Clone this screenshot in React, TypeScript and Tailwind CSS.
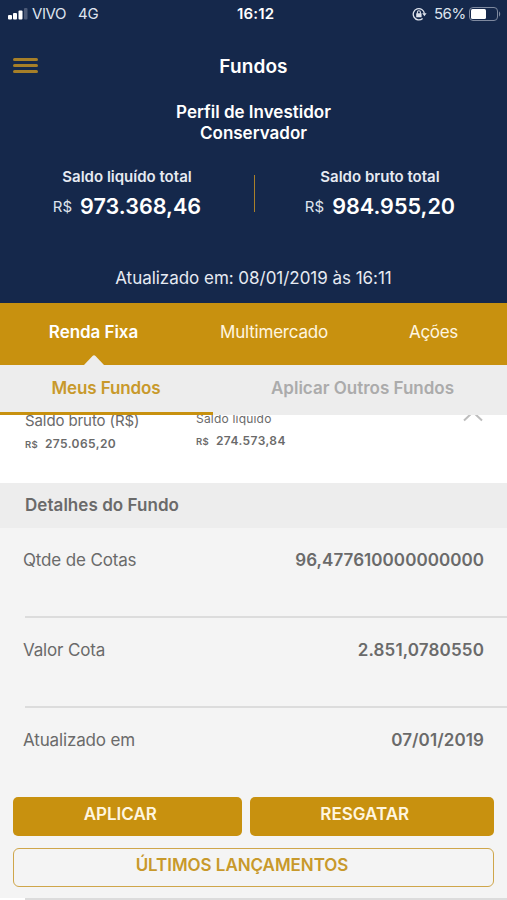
import React from 'react';
import clsx from 'clsx';

const BALANCES = [
    { label: 'Saldo liquído total', amount: '973.368,46' },
    { label: 'Saldo bruto total', amount: '984.955,20' }
];

const DETAILS = [
    { label: 'Qtde de Cotas', value: '96,477610000000000', spacing: 'tracking-[0.05px]' },
    { label: 'Valor Cota', value: '2.851,0780550', spacing: 'tracking-[0.15px]' },
    { label: 'Atualizado em', value: '07/01/2019', spacing: 'tracking-[0.1px]' }
];

const StatusBar = () => (
    <div className="flex h-7 items-center pl-2 pr-1 text-[15px] leading-7 text-[#dfe4ee]">
        <svg width="20" height="12" viewBox="0 0 20 12" className="shrink-0">
            <rect x="0" y="7" width="4" height="4.5" rx="1" fill="#fff" />
            <rect x="5" y="5" width="4" height="6.5" rx="1" fill="#fff" />
            <rect x="10.5" y="2.5" width="4" height="9" rx="1" fill="#fff" />
            <rect x="16" y="0" width="3.5" height="11.5" rx="1" fill="#4c5a77" />
        </svg>
        <span className="ml-1 w-[46px] tracking-[-0.4px]">VIVO</span>
        <span className="w-[159px] tracking-[-0.2px]">4G</span>
        <span className="w-[175px] font-semibold tracking-[0.2px] text-white">16:12</span>
        <svg width="15" height="14" viewBox="0 0 15 14" className="shrink-0" fill="none" stroke="#dfe4ee">
            <path d="M10.6 11.4A5.6 5.6 0 1 1 12.4 6.6" strokeWidth="1.3" />
            <path d="M10.2 6.2h4.4L12.4 9.2z" fill="#dfe4ee" stroke="none" />
            <rect x="4.2" y="6.3" width="5.4" height="4" rx="0.5" fill="#dfe4ee" stroke="none" />
            <path d="M5.4 6.8V5.2a1.5 1.5 0 0 1 3 0v1.6" strokeWidth="1.1" />
        </svg>
        <span className="ml-[7px] w-[35px] tracking-[-0.5px]">56%</span>
        <svg width="32" height="14" viewBox="0 0 32 14" className="shrink-0">
            <rect x="0.5" y="0.5" width="28" height="13" rx="3.5" fill="none" stroke="#7e899f" />
            <rect x="2" y="2" width="15" height="10" rx="1.5" fill="#fff" />
            <path d="M30 4.5c1.6.6 1.6 4.4 0 5z" fill="#7e899f" />
        </svg>
    </div>
);

const Header = () => (
    <header className="h-[303px] bg-[#15284b] text-white">
        <StatusBar />
        <div className="grid h-[74px] grid-cols-[1fr_auto_1fr] items-center px-[13px]">
            <button className="flex w-[25px] flex-col gap-[3px]" aria-label="Menu">
                <span className="h-[3px] w-full rounded-full bg-[#a67f28]" />
                <span className="h-[3px] w-full rounded-full bg-[#a67f28]" />
                <span className="h-[3px] w-full rounded-full bg-[#a67f28]" />
            </button>
            <h1 className="pt-1 text-[19px] font-semibold tracking-[0.1px]">Fundos</h1>
        </div>
        <p className="text-center text-[17px] font-semibold leading-[21px]">
            Perfil de Investidor
            <br />
            Conservador
        </p>
        <div className="mt-[23px] flex">
            <div className="w-[254px] text-center">
                <Balance {...BALANCES[0]} />
            </div>
            <div className="mt-2 h-[37px] w-px bg-[#a9802a]" />
            <div className="w-[250px] text-center">
                <Balance {...BALANCES[1]} />
            </div>
        </div>
        <p className="mt-[43px] text-center text-[17px] leading-6 tracking-[-0.03px] text-[#e6eaf2]">
            Atualizado em: 08/01/2019 às 16:11
        </p>
    </header>
);

const Balance = ({ label, amount }: { label: string; amount: string }) => (
    <>
        <div className="text-[15px] font-semibold leading-5 text-[#e6eaf2]">{label}</div>
        <div className="mt-0.5 flex items-center justify-center gap-2 leading-8">
            <span className="pt-0.5 text-[15px] text-[#dfe4ee]">R$</span>
            <span className="text-[21.6px] font-semibold">{amount}</span>
        </div>
    </>
);

const Tabs = () => (
    <nav className="flex h-[62px] bg-[#c8910f] text-[17px] leading-[58px] text-[#fff6e0]">
        <div className="relative w-[187px] text-center font-semibold tracking-[-0.05px] text-white">
            Renda Fixa
            <svg width="20" height="10" viewBox="0 0 20 10" className="absolute bottom-0 left-[84px]">
                <path d="M0 10 8.5 1q1.5-1.5 3 0L20 10z" fill="#ededed" />
            </svg>
        </div>
        <div className="w-[174px] text-center tracking-[-0.2px]">Multimercado</div>
        <div className="w-[145px] text-center tracking-[-0.3px]">Ações</div>
    </nav>
);

const SubTabs = () => (
    <div className="relative z-10 flex h-[50px] bg-[#ededed] text-[17px] font-semibold leading-[46px]">
        <div className="w-[213px] shrink-0 border-b-[3px] border-[#c8910f] pr-px text-center tracking-[-0.1px] text-[#c8992b]">
            Meus Fundos
        </div>
        <div className="flex-1 pl-[5px] text-center text-[#ababab]">Aplicar Outros Fundos</div>
    </div>
);

const FundSummary = () => (
    <section className="flex h-[68px] bg-white text-[#6a6a6a]">
        <div className="-mt-1 w-[171px] shrink-0 pl-[25px]">
            <div className="text-[15px] leading-5 tracking-[-0.1px]">Saldo bruto (R$)</div>
            <div className="mt-1 flex items-baseline gap-[7px] font-semibold leading-[18px]">
                <span className="text-[9.5px] tracking-[0.3px]">R$</span>
                <span className="text-[12px] tracking-[0.4px]">275.065,20</span>
            </div>
        </div>
        <div className="-mt-1 w-[267px] shrink-0 pl-[25px]">
            <div className="text-[12px] leading-4 tracking-[0.2px]">Saldo líquido</div>
            <div className="mt-[5px] flex items-baseline gap-[7px] font-semibold leading-[18px]">
                <span className="text-[9.5px] tracking-[0.3px]">R$</span>
                <span className="text-[12px] tracking-[0.4px]">274.573,84</span>
            </div>
        </div>
        <svg width="20" height="11" viewBox="0 0 20 11" className="-mt-1 ml-[25px]">
            <path d="M1 9.5 10 1l9 8.5" fill="none" stroke="#bdbdbd" strokeWidth="2" />
        </svg>
    </section>
);

const FundDetails = () => (
    <section className="h-[314px] bg-[#f4f4f4] text-[#6a6a6a]">
        <h2 className="h-[45px] bg-[#ededed] pl-[25px] text-[17px] font-semibold leading-[45px] tracking-[0.05px]">
            Detalhes do Fundo
        </h2>
        {DETAILS.map((item, i) => (
            <div key={item.label}>
                <div className="flex h-[88px] justify-between px-[23px] pt-5 text-[17px] leading-[25px]">
                    <span className="tracking-[-0.15px]">{item.label}</span>
                    <span className={clsx('font-semibold', item.spacing)}>{item.value}</span>
                </div>
                {i < DETAILS.length - 1 && <div className="ml-[25px] h-0.5 bg-[#dcdcdc]" />}
            </div>
        ))}
    </section>
);

const Actions = () => (
    <footer className="flex h-[103px] flex-col bg-[#f4f4f4] text-[17px] font-semibold">
        <div className="flex gap-2 px-[13px] leading-[34px] text-[#fff6e0]">
            <button className="h-[39px] w-[229px] rounded-[5px] bg-[#c8910f] pb-[5px] pr-[14px]">APLICAR</button>
            <button className="h-[39px] w-[245px] rounded-[5px] bg-[#c8910f] pb-[5px] pr-[14px]">RESGATAR</button>
        </div>
        <button className="mx-[13px] mt-3 h-[39px] shrink-0 rounded-md border-[1.5px] border-[#cfa64a] pb-[5px] pr-[23px] leading-8 tracking-[-0.05px] text-[#c8992b]">
            ÚLTIMOS LANÇAMENTOS
        </button>
        <div className="mt-[11px] flex h-0.5">
            <div className="w-[25px] bg-white" />
            <div className="flex-1 bg-[#dcdcdc]" />
        </div>
    </footer>
);

export default function App() {
    return (
        <div className="h-[900px] w-[507px] overflow-hidden bg-[#f4f4f4] font-['Inter',sans-serif]">
            <Header />
            <Tabs />
            <SubTabs />
            <FundSummary />
            <FundDetails />
            <Actions />
        </div>
    );
}
